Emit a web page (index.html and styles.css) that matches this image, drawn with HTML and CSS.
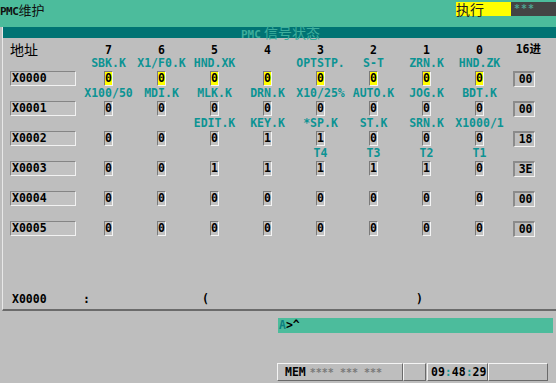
FILE: index.html
```html
<!DOCTYPE html>
<html lang="zh">
  <head>
    <meta charset="UTF-8" />
    <meta name="viewport" content="width=device-width, initial-scale=1.0" />
    <title>PMC维护</title>
    <link rel="stylesheet" href="styles.css">
  </head>
  <body>
    <div class="screen">
      <!-- Top title bar -->
      <div class="topbar">
        <div class="screen-title"><b>PMC</b>维护</div>
        <div class="mode">执行</div>
        <div class="alarm">***</div>
      </div>

      <!-- Signal status panel -->
      <div class="panel">
        <div class="panel-title"><b>PMC</b> 信号状态</div>
        <div id="signalGrid" class="signal-grid">
          <div class="head-addr">地址</div>
          <div class="head-bit">7</div>
          <div class="head-bit">6</div>
          <div class="head-bit">5</div>
          <div class="head-bit">4</div>
          <div class="head-bit">3</div>
          <div class="head-bit">2</div>
          <div class="head-bit">1</div>
          <div class="head-bit">0</div>
          <div class="head-hex">16进</div>
        </div>
        <div class="cursor-line">
          <span class="cl-addr">X0000</span><span class="cl-colon">:</span><span class="cl-open">(</span><span>)</span>
        </div>
      </div>

      <div class="input-line"><span class="prompt">A</span>&gt;^</div>

      <!-- Status bar -->
      <div class="status-bar">
        <div class="status-box mem">MEM<span class="dim">**** *** ***</span></div>
        <div class="status-box blank-small"></div>
        <div class="status-box clock">09<span class="sep">:</span>48<span class="sep">:</span>29</div>
        <div class="status-box blank-wide"></div>
      </div>
    </div>

    <script>
      const rows = [
        { addr: "X0000", cursor: true, labels: ["SBK.K", "X1/F0.K", "HND.XK", "", "OPTSTP.", "S-T", "ZRN.K", "HND.ZK"], bits: [0, 0, 0, 0, 0, 0, 0, 0] },
        { addr: "X0001", labels: ["X100/50", "MDI.K", "MLK.K", "DRN.K", "X10/25%", "AUTO.K", "JOG.K", "BDT.K"], bits: [0, 0, 0, 0, 0, 0, 0, 0] },
        { addr: "X0002", labels: ["", "", "EDIT.K", "KEY.K", "*SP.K", "ST.K", "SRN.K", "X1000/1"], bits: [0, 0, 0, 1, 1, 0, 0, 0] },
        { addr: "X0003", labels: ["", "", "", "", "T4", "T3", "T2", "T1"], bits: [0, 0, 1, 1, 1, 1, 1, 0] },
        { addr: "X0004", labels: ["", "", "", "", "", "", "", ""], bits: [0, 0, 0, 0, 0, 0, 0, 0] },
        { addr: "X0005", labels: ["", "", "", "", "", "", "", ""], bits: [0, 0, 0, 0, 0, 0, 0, 0] },
      ];

      function cell(className, text) {
        const el = document.createElement("div");
        el.className = className;
        el.textContent = text;
        return el;
      }

      const grid = document.getElementById("signalGrid");

      rows.forEach(function (row) {
        // label line
        grid.appendChild(cell("label", ""));
        row.labels.forEach(function (name) {
          grid.appendChild(cell("label", name));
        });
        grid.appendChild(cell("label", ""));

        // value line
        const addr = document.createElement("div");
        addr.className = "addr-cell";
        addr.appendChild(cell("addr-box", row.addr));
        grid.appendChild(addr);

        let value = 0;
        row.bits.forEach(function (bit) {
          value = value * 2 + bit;
          const wrap = document.createElement("div");
          wrap.className = "bit-cell";
          wrap.appendChild(cell(row.cursor ? "bit-box cursor" : "bit-box", String(bit)));
          grid.appendChild(wrap);
        });

        const hex = value.toString(16).toUpperCase().padStart(2, "0");
        grid.appendChild(cell("hex-box", hex));
      });
    </script>
  </body>
</html>
```

FILE: styles.css
```css
body {
  margin: 0;
  padding: 0;
  background-color: #bebebe;
  font-family: "DejaVu Sans Mono", "Noto Sans CJK SC", monospace;
  font-size: 11.5px;
  font-weight: bold;
  color: #000;
}

.screen {
  width: 556px;
  height: 383px;
  overflow: hidden;
}

/* Top bar */
.topbar {
  display: flex;
  align-items: flex-start;
  height: 27px;
  background-color: #4cbc9c;
}

.screen-title {
  flex: 1;
  padding-top: 2px;
  font-family: "Noto Sans CJK SC", sans-serif;
  font-weight: normal;
  font-size: 13px;
  line-height: 15px;
  color: #101010;
}

.screen-title b {
  font-family: "DejaVu Sans Mono", monospace;
  font-size: 11px;
  letter-spacing: -0.5px;
}

.mode {
  width: 55px;
  height: 14px;
  margin-top: 2px;
  background-color: #ffff00;
  font-family: "Noto Sans CJK SC", sans-serif;
  font-weight: normal;
  font-size: 14px;
  line-height: 15px;
  white-space: nowrap;
  color: #202020;
}

.alarm {
  width: 42px;
  height: 14px;
  margin-top: 2px;
  padding-left: 3px;
  background-color: #444444;
  color: #4fa392;
  font-size: 10px;
  line-height: 14px;
  letter-spacing: 1px;
}

/* Panel */
.panel {
  display: flex;
  flex-direction: column;
  height: 284px;
  margin-left: 2px;
  border-left: 1px solid #e8e8e8;
  border-bottom: 2px solid #6b6b6b;
  box-sizing: border-box;
}

.panel-title {
  height: 11px;
  padding-left: 2px;
  background-color: #007373;
  color: #3eae9c;
  text-align: center;
  font-family: "Noto Sans CJK SC", sans-serif;
  font-weight: normal;
  font-size: 14px;
  line-height: 11px;
  white-space: nowrap;
}

.panel-title b {
  font-family: "DejaVu Sans Mono", monospace;
  font-size: 11px;
}

.signal-grid {
  display: grid;
  grid-template-columns: 72px repeat(8, 53px) 35px;
  grid-template-rows: 14px;
  grid-auto-rows: 15px;
  margin-top: 4px;
  padding-left: 7px;
}

.head-addr {
  font-family: "Noto Sans CJK SC", sans-serif;
  font-weight: normal;
  font-size: 14px;
  line-height: 14px;
}

.head-bit {
  text-align: center;
  line-height: 17px;
}

.head-hex {
  justify-self: end;
  font-family: "DejaVu Sans Mono", "Noto Sans CJK SC", monospace;
  font-size: 11.5px;
  line-height: 15px;
}

.label {
  text-align: center;
  white-space: nowrap;
  color: #0c9393;
  line-height: 14px;
}

.addr-box {
  width: 66px;
  height: 15px;
  box-sizing: border-box;
  padding-left: 1px;
  border: 1px solid;
  border-color: #858585 #f2f2f2 #f2f2f2 #858585;
  background-color: #c2c2c2;
  line-height: 13px;
}

.bit-cell {
  display: flex;
  justify-content: center;
}

.bit-box {
  width: 9px;
  height: 15px;
  box-sizing: border-box;
  border: 1px solid;
  border-color: #7a7a7a #f4f4f4 #f4f4f4 #7a7a7a;
  background-color: #c2c2c2;
  line-height: 13px;
  text-align: center;
  overflow: hidden;
}

.bit-box.cursor {
  background-color: #ffff00;
}

.hex-box {
  justify-self: center;
  width: 22px;
  height: 16px;
  box-sizing: border-box;
  padding-right: 1px;
  border-style: solid;
  border-width: 2px 1px 1px 2px;
  border-color: #8a8a8a #f4f4f4 #f4f4f4 #8a8a8a;
  text-align: right;
  line-height: 13px;
}

.cursor-line {
  display: flex;
  margin-top: auto;
  padding: 0 0 3px 9px;
  line-height: 14px;
}

.cl-addr {
  width: 71px;
}

.cl-colon {
  width: 119px;
}

.cl-open {
  width: 214px;
}

/* Input line */
.input-line {
  width: 274px;
  height: 15px;
  margin: 7px 0 0 278px;
  padding-left: 1px;
  background-color: #4cbc9c;
  line-height: 15px;
}

.prompt {
  color: #0c7f7f;
}

/* Status bar */
.status-bar {
  display: flex;
  height: 18px;
  margin: 30px 0 0 277px;
}

.status-box {
  height: 18px;
  box-sizing: border-box;
  border: 1px solid;
  border-color: #f4f4f4 #6a6a6a #6a6a6a #f4f4f4;
  line-height: 16px;
}

.mem {
  width: 126px;
  padding-left: 7px;
}

.mem .dim {
  margin-left: 4px;
  color: #7a7a7a;
  font-size: 10px;
}

.blank-small {
  width: 23px;
  margin-right: 1px;
}

.clock {
  width: 61px;
  padding-left: 3px;
}

.clock .sep {
  color: #1a9a9a;
}

.blank-wide {
  width: 60px;
}
```
